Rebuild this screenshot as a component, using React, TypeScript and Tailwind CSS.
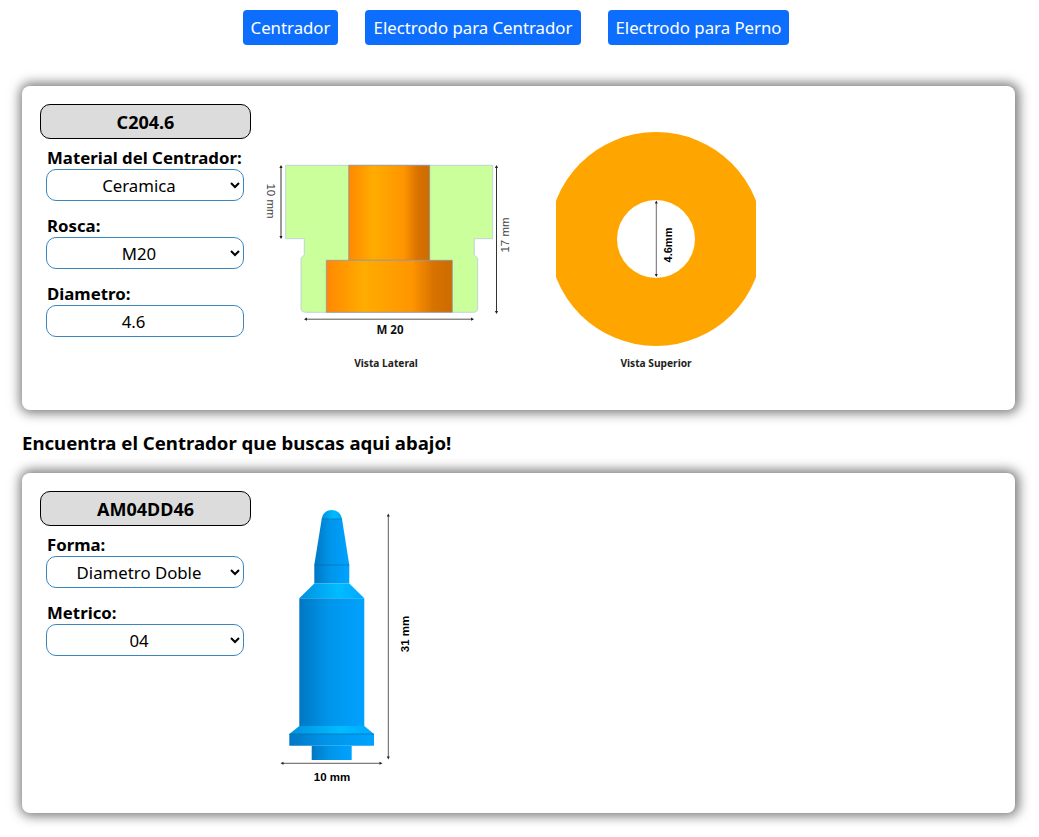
const font = { fontFamily: '"Noto Sans", "Open Sans", sans-serif' };

const tabs = [
  { name: "Centrador", width: "w-[95px]" },
  { name: "Electrodo para Centrador", width: "w-[216px]" },
  { name: "Electrodo para Perno", width: "w-[181px]" },
];

function Field({ label, children }: { label: string; children: React.ReactNode }) {
  return (
    <div className="mb-3 ml-[6px] w-[198px]">
      <label className="block h-6 pt-px pl-px text-[16.8px] leading-6 font-bold whitespace-nowrap text-black">{label}</label>
      {children}
    </div>
  );
}

function Picker({ value }: { value: string }) {
  return (
    <select
      defaultValue={value}
      className="block h-8 w-full rounded-[10px] border border-[#3a87c0] bg-white text-center text-[16.8px] text-black"
    >
      <option>{value}</option>
    </select>
  );
}

function CodeBox({ code }: { code: string }) {
  return (
    <div className="mb-[6px] flex h-[35px] w-[211px] items-center justify-center rounded-[10px] border border-black bg-[#dcdcdc] pt-px text-[18px] font-bold text-black">
      {code}
    </div>
  );
}

function SideView() {
  return (
    <svg className="mt-[26px] ml-[11px] shrink-0" width="248" height="245" viewBox="262 130 248 245">
      <defs>
        <linearGradient id="brass" x1="0" x2="1" y1="0" y2="0">
          <stop offset="0" stopColor="#ff8800" />
          <stop offset="0.3" stopColor="#ffac00" />
          <stop offset="0.68" stopColor="#ff9500" />
          <stop offset="0.85" stopColor="#d87200" />
          <stop offset="1" stopColor="#cc6c00" />
        </linearGradient>
      </defs>
      <path
        d="M285.7 165.3H492.7V238.7H474.3V255L477.7 258V308Q477.7 312.3 473 312.3H306Q301 312.3 301 308V258L304.3 255V238.7H285.7Z"
        fill="#caff9c"
        stroke="#b9c8dc"
        strokeWidth="0.8"
      />
      <path d="M348.7 165.3H429.7V260.3H348.7Z" fill="url(#brass)" stroke="#8a8fc0" strokeWidth="0.7" />
      <path d="M326.3 260.3H452.3V312.3H326.3Z" fill="url(#brass)" stroke="#8a8fc0" strokeWidth="0.7" />
      <g stroke="#333" strokeWidth="1">
        <path d="M281 166V238" />
        <path d="M496.5 166V313" />
        <path d="M305 319.2H473" stroke="#555" />
      </g>
      <g fill="#222">
        <path d="M281 165l-1.6 3h3.2zM281 239l-1.6-3h3.2zM496.5 165l-1.6 3h3.2zM496.5 314l-1.6-3h3.2zM304 319.2l3-1.6v3.2zM474 319.2l-3-1.6v3.2z" />
      </g>
      <text x="271" y="201" transform="rotate(90 271 201)" textAnchor="middle" dominantBaseline="central" fontSize="11.5" fill="#444" fontFamily="Liberation Sans, sans-serif">10 mm</text>
      <text x="505" y="235" transform="rotate(-90 505 235)" textAnchor="middle" dominantBaseline="central" fontSize="11.5" fill="#444" fontFamily="Liberation Sans, sans-serif">17 mm</text>
      <text x="390" y="334" textAnchor="middle" fontSize="11.5" fontWeight="700" fill="#111" style={font}>M 20</text>
      <text x="386" y="367" textAnchor="middle" fontSize="10.2" fontWeight="700" fill="#222" style={font}>Vista Lateral</text>
    </svg>
  );
}

function TopView() {
  return (
    <svg className="mt-[26px] ml-[46px] shrink-0" width="200" height="245" viewBox="556 130 200 245">
      <circle cx="656" cy="239" r="107" fill="#ffa500" />
      <circle cx="656" cy="239" r="39" fill="#fff" />
      <path d="M656.3 202V276" stroke="#444" strokeWidth="0.8" />
      <path d="M656.3 200.5l-1.5 3h3zM656.3 277l-1.5-3h3z" fill="#222" />
      <text x="668" y="245" transform="rotate(-90 668 245)" textAnchor="middle" dominantBaseline="central" fontSize="11" fontWeight="700" fill="#000" fontFamily="Liberation Sans, sans-serif">4.6mm</text>
      <text x="656" y="367" textAnchor="middle" fontSize="10.2" fontWeight="700" fill="#222" style={font}>Vista Superior</text>
    </svg>
  );
}

function PinView() {
  return (
    <svg className="mt-[9px] ml-[19px] shrink-0" width="150" height="292" viewBox="270 500 150 292">
      <defs>
        <linearGradient id="steel" x1="0" x2="1" y1="0" y2="0">
          <stop offset="0" stopColor="#0077c4" />
          <stop offset="0.45" stopColor="#0095ea" />
          <stop offset="1" stopColor="#00a2ff" />
        </linearGradient>
        <linearGradient id="steelLight" x1="0" x2="1" y1="0" y2="0">
          <stop offset="0" stopColor="#0090e0" />
          <stop offset="0.6" stopColor="#00bcff" />
          <stop offset="1" stopColor="#00a8ff" />
        </linearGradient>
      </defs>
      <path d="M321.7 519C322.5 513 327 510 331.7 510S341 513 342 519Z" fill="url(#steelLight)" />
      <path d="M321.7 519H342L349.3 565H314.3Z" fill="url(#steel)" />
      <path d="M314.3 565H349.3V583.5H314.3Z" fill="url(#steel)" />
      <path d="M314.3 583.5H349.3L364.3 598.3H299.3Z" fill="url(#steelLight)" />
      <path d="M299.3 598.3H364.3V726H299.3Z" fill="url(#steel)" />
      <path d="M299.3 726H364.3L374 734H289.3Z" fill="url(#steelLight)" />
      <path d="M289.3 734H374V745.7H289.3Z" fill="url(#steel)" />
      <path d="M311.7 745.7H351.7V760H311.7Z" fill="url(#steel)" />
      <path d="M321.7 519H342M314.3 565H349.3M289.3 734H374" stroke="#00689f" strokeWidth="0.6" />
      <path d="M388.3 515V758M282 763.3H381" stroke="#333" strokeWidth="0.8" />
      <path d="M388.3 513.5l-1.5 3h3zM388.3 759.5l-1.5-3h3zM280.5 763.3l3-1.5v3zM382.5 763.3l-3-1.5v3z" fill="#222" />
      <text x="405" y="634" transform="rotate(-90 405 634)" textAnchor="middle" dominantBaseline="central" fontSize="11.5" fontWeight="700" fill="#000" fontFamily="Liberation Sans, sans-serif">31 mm</text>
      <text x="332" y="781" textAnchor="middle" fontSize="11.5" fontWeight="700" fill="#000" fontFamily="Liberation Sans, sans-serif">10 mm</text>
    </svg>
  );
}

export default function App() {
  return (
    <div className="min-h-[837px] bg-white text-black" style={font}>
      <div className="flex justify-center gap-[27px] pt-[10px] pr-[7px]">
        {tabs.map((tab) => (
          <button
            key={tab.name}
            className={`h-[35px] rounded-[4px] bg-[#0d6efd] text-[16.8px] whitespace-nowrap text-white ${tab.width}`}
          >
            {tab.name}
          </button>
        ))}
      </div>

      <section className="mx-[22px] mt-[41px] mr-[24px] flex h-[324px] rounded-lg bg-white px-[18px] pt-[18px] shadow-[1px_0_12px_3px_#777]">
        <div className="w-[211px] shrink-0">
          <CodeBox code="C204.6" />
          <Field label="Material del Centrador:">
            <Picker value="Ceramica" />
          </Field>
          <Field label="Rosca:">
            <Picker value="M20" />
          </Field>
          <Field label="Diametro:">
            <input
              type="number"
              defaultValue="4.6"
              className="block h-8 w-full rounded-[10px] border border-[#3a87c0] bg-white pr-2 text-center text-[16.8px] text-black"
            />
          </Field>
        </div>
        <SideView />
        <TopView />
      </section>

      <h2 className="mx-[22px] mt-5 h-[43px] text-[18.6px] leading-[26px] font-bold">Encuentra el Centrador que buscas aqui abajo!</h2>

      <section className="mx-[22px] mr-[24px] flex h-[340px] rounded-lg bg-white px-[18px] pt-[18px] shadow-[1px_0_12px_3px_#777]">
        <div className="w-[211px] shrink-0">
          <CodeBox code="AM04DD46" />
          <Field label="Forma:">
            <Picker value="Diametro Doble" />
          </Field>
          <Field label="Metrico:">
            <Picker value="04" />
          </Field>
        </div>
        <PinView />
      </section>
    </div>
  );
}
